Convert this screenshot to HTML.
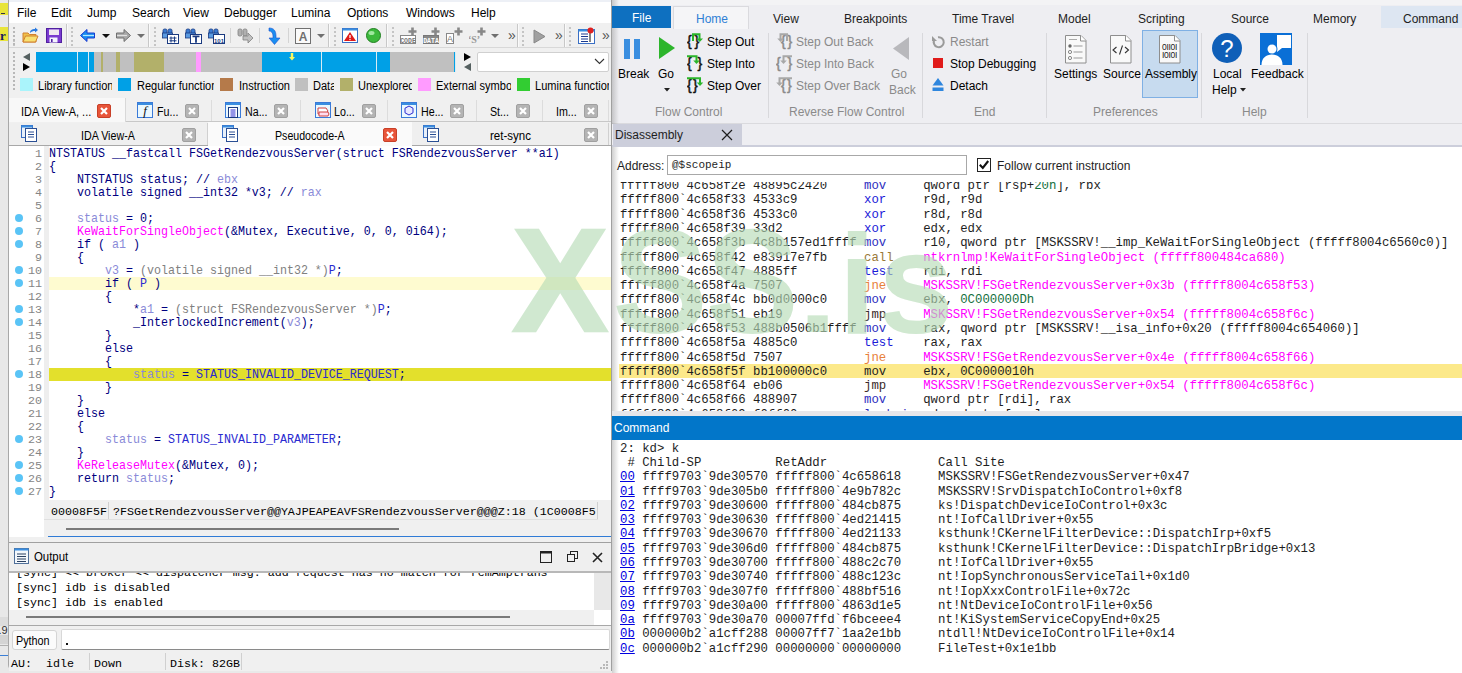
<!DOCTYPE html>
<html><head><meta charset="utf-8"><style>
*{box-sizing:border-box;margin:0;padding:0}
body{width:1462px;height:673px;position:relative;overflow:hidden;background:#e9e9e9;font-family:"Liberation Sans",sans-serif;font-size:12px;color:#000}
.a{position:absolute}
.t{position:absolute;white-space:pre;line-height:1}
.mono{font-family:"Liberation Mono",monospace}
</style></head>
<body>
<div class="a" style="left:0;top:0;width:9px;height:673px;background:#e8e8e8"></div><div class="a" style="left:0;top:3px;width:8px;height:12px;background:#e8e43a"></div><div class="a" style="left:0;top:27px;width:8px;height:13.5px;background:#e8e43a"></div><div class="a" style="left:1px;top:13px;width:4px;height:1px;background:#334"></div><div class="t" style="left:0px;top:29px;font-size:13px;font-family:&quot;Liberation Serif&quot;;font-weight:bold;color:#1a1a60">r</div><div class="a" style="left:0;top:617px;width:8px;height:9px;background:#dcdcdc"></div><div class="t" style="left:-1.5px;top:625px;font-size:11px;color:#333">.9</div><div class="a" style="left:0;top:635px;width:8px;height:9px;background:#d4d4d4"></div><div class="a" style="left:0;top:645px;width:8px;height:1px;background:#b0b0b0"></div><div class="a" style="left:0;top:655px;width:8px;height:1px;background:#3b7fd6"></div><div class="a" style="left:8px;top:0;width:604px;height:671px;background:#f0f0f0;border-left:1px solid #a8a8a8;border-right:1px solid #a0a0a0;border-bottom:1px solid #a0a0a0;border-radius:0 0 0 6px"></div><div class="a" style="left:9px;top:0;width:602px;height:2px;background:#edf0f6"></div><div class="a" style="left:9px;top:2px;width:602px;height:21px;background:#fff"></div><div class="t" style="left:17px;top:7px;font-size:12px;color:#000">File</div><div class="t" style="left:51px;top:7px;font-size:12px;color:#000">Edit</div><div class="t" style="left:87px;top:7px;font-size:12px;color:#000">Jump</div><div class="t" style="left:132px;top:7px;font-size:12px;color:#000">Search</div><div class="t" style="left:183px;top:7px;font-size:12px;color:#000">View</div><div class="t" style="left:224px;top:7px;font-size:12px;color:#000">Debugger</div><div class="t" style="left:291px;top:7px;font-size:12px;color:#000">Lumina</div><div class="t" style="left:347px;top:7px;font-size:12px;color:#000">Options</div><div class="t" style="left:406px;top:7px;font-size:12px;color:#000">Windows</div><div class="t" style="left:471px;top:7px;font-size:12px;color:#000">Help</div><div class="a" style="left:9px;top:23px;width:602px;height:25px;background:#f0f0f0;border-bottom:1px solid #d8d8d8"></div><div class="a" style="left:66px;top:24px;width:1px;height:23px;background:#c8c8c8"></div><div class="a" style="left:67px;top:24px;width:1px;height:23px;background:#fafafa"></div><div class="a" style="left:148px;top:24px;width:1px;height:23px;background:#c8c8c8"></div><div class="a" style="left:149px;top:24px;width:1px;height:23px;background:#fafafa"></div><div class="a" style="left:328px;top:24px;width:1px;height:23px;background:#c8c8c8"></div><div class="a" style="left:329px;top:24px;width:1px;height:23px;background:#fafafa"></div><div class="a" style="left:386px;top:24px;width:1px;height:23px;background:#c8c8c8"></div><div class="a" style="left:387px;top:24px;width:1px;height:23px;background:#fafafa"></div><div class="a" style="left:517px;top:24px;width:1px;height:23px;background:#c8c8c8"></div><div class="a" style="left:518px;top:24px;width:1px;height:23px;background:#fafafa"></div><div class="a" style="left:564px;top:24px;width:1px;height:23px;background:#c8c8c8"></div><div class="a" style="left:565px;top:24px;width:1px;height:23px;background:#fafafa"></div><div class="a" style="left:13px;top:27.0px;width:2px;height:2px;background:#c4c4c4"></div><div class="a" style="left:13px;top:31.2px;width:2px;height:2px;background:#c4c4c4"></div><div class="a" style="left:13px;top:35.4px;width:2px;height:2px;background:#c4c4c4"></div><div class="a" style="left:13px;top:39.6px;width:2px;height:2px;background:#c4c4c4"></div><div class="a" style="left:13px;top:43.8px;width:2px;height:2px;background:#c4c4c4"></div><div class="a" style="left:71px;top:27.0px;width:2px;height:2px;background:#c4c4c4"></div><div class="a" style="left:71px;top:31.2px;width:2px;height:2px;background:#c4c4c4"></div><div class="a" style="left:71px;top:35.4px;width:2px;height:2px;background:#c4c4c4"></div><div class="a" style="left:71px;top:39.6px;width:2px;height:2px;background:#c4c4c4"></div><div class="a" style="left:71px;top:43.8px;width:2px;height:2px;background:#c4c4c4"></div><div class="a" style="left:154px;top:27.0px;width:2px;height:2px;background:#c4c4c4"></div><div class="a" style="left:154px;top:31.2px;width:2px;height:2px;background:#c4c4c4"></div><div class="a" style="left:154px;top:35.4px;width:2px;height:2px;background:#c4c4c4"></div><div class="a" style="left:154px;top:39.6px;width:2px;height:2px;background:#c4c4c4"></div><div class="a" style="left:154px;top:43.8px;width:2px;height:2px;background:#c4c4c4"></div><div class="a" style="left:334px;top:27.0px;width:2px;height:2px;background:#c4c4c4"></div><div class="a" style="left:334px;top:31.2px;width:2px;height:2px;background:#c4c4c4"></div><div class="a" style="left:334px;top:35.4px;width:2px;height:2px;background:#c4c4c4"></div><div class="a" style="left:334px;top:39.6px;width:2px;height:2px;background:#c4c4c4"></div><div class="a" style="left:334px;top:43.8px;width:2px;height:2px;background:#c4c4c4"></div><div class="a" style="left:392px;top:27.0px;width:2px;height:2px;background:#c4c4c4"></div><div class="a" style="left:392px;top:31.2px;width:2px;height:2px;background:#c4c4c4"></div><div class="a" style="left:392px;top:35.4px;width:2px;height:2px;background:#c4c4c4"></div><div class="a" style="left:392px;top:39.6px;width:2px;height:2px;background:#c4c4c4"></div><div class="a" style="left:392px;top:43.8px;width:2px;height:2px;background:#c4c4c4"></div><div class="a" style="left:522px;top:27.0px;width:2px;height:2px;background:#c4c4c4"></div><div class="a" style="left:522px;top:31.2px;width:2px;height:2px;background:#c4c4c4"></div><div class="a" style="left:522px;top:35.4px;width:2px;height:2px;background:#c4c4c4"></div><div class="a" style="left:522px;top:39.6px;width:2px;height:2px;background:#c4c4c4"></div><div class="a" style="left:522px;top:43.8px;width:2px;height:2px;background:#c4c4c4"></div><div class="a" style="left:569px;top:27.0px;width:2px;height:2px;background:#c4c4c4"></div><div class="a" style="left:569px;top:31.2px;width:2px;height:2px;background:#c4c4c4"></div><div class="a" style="left:569px;top:35.4px;width:2px;height:2px;background:#c4c4c4"></div><div class="a" style="left:569px;top:39.6px;width:2px;height:2px;background:#c4c4c4"></div><div class="a" style="left:569px;top:43.8px;width:2px;height:2px;background:#c4c4c4"></div><svg class="a" style="left:22px;top:27px" width="17" height="17"><path d="M1 6h5l1.5 1.5H14V15H1z" fill="#f0c048" stroke="#d08030"/><path d="M1 15l2.5-6H16l-2.5 6z" fill="#f8e070" stroke="#d08030"/><path d="M8 6c0-3 2-4 5-4V0.5L16 3l-3 2.5V4c-2 0-3.5 0.5-5 2z" fill="#2a7ae0"/></svg><svg class="a" style="left:46px;top:28px" width="16" height="15"><rect x="0.5" y="0.5" width="15" height="14" fill="#7a3ad0" stroke="#5020a0"/><rect x="3" y="1.5" width="10" height="5.5" fill="#f0e8f0"/><rect x="3.5" y="9.5" width="8" height="5" fill="#f4f4ff"/><rect x="5" y="11" width="1.6" height="3" fill="#5020a0"/></svg><svg class="a" style="left:80px;top:29px" width="15" height="13"><path d="M0.5 6.5L7 0.5v3.5h7.5v5H7v3.5z" fill="#1a8ef0" stroke="#1a3ad0" stroke-width="1"/><path d="M3 6.5h11" stroke="#b8e8ff" stroke-width="1.2"/></svg><svg class="a" style="left:102px;top:34px" width="8" height="5"><path d="M0 0h8L4 4z" fill="#111"/></svg><svg class="a" style="left:116px;top:29px" width="15" height="13"><path d="M14.5 6.5L8 0.5v3.5H0.5v5H8v3.5z" fill="#a8a8a8" stroke="#707070" stroke-width="1"/><path d="M1 6.5h10" stroke="#e0e0e0" stroke-width="1.2"/></svg><svg class="a" style="left:137px;top:34px" width="8" height="5"><path d="M0 0h8L4 4z" fill="#707070"/></svg><svg class="a" style="left:162px;top:27px" width="17" height="17"><rect x="1" y="2" width="4" height="7" rx="1.5" fill="#3a7ad0" stroke="#1a3a80" stroke-width="0.8"/><rect x="6" y="2" width="4" height="7" rx="1.5" fill="#3a7ad0" stroke="#1a3a80" stroke-width="0.8"/><rect x="0.5" y="6" width="10" height="5" fill="#5a9ae0" stroke="#1a3a80" stroke-width="0.8"/><rect x="5.5" y="7.5" width="11" height="9" fill="#fff" stroke="#1a3a80"/><path d="M9 9.5v6M12.5 9.5v6M7.5 11h7M7.5 13.8h7" stroke="#1a3a80" stroke-width="1"/></svg><svg class="a" style="left:185px;top:27px" width="17" height="17"><rect x="1" y="2" width="4" height="7" rx="1.5" fill="#3a7ad0" stroke="#1a3a80" stroke-width="0.8"/><rect x="6" y="2" width="4" height="7" rx="1.5" fill="#3a7ad0" stroke="#1a3a80" stroke-width="0.8"/><rect x="0.5" y="6" width="10" height="5" fill="#5a9ae0" stroke="#1a3a80" stroke-width="0.8"/><rect x="5.5" y="7.5" width="11" height="9" fill="#fff" stroke="#1a3a80"/><path d="M7.5 9.3h7M11 9.3v6.5" stroke="#1a3a80" stroke-width="1.8"/></svg><svg class="a" style="left:208px;top:27px" width="17" height="17"><rect x="1" y="2" width="4" height="7" rx="1.5" fill="#3a7ad0" stroke="#1a3a80" stroke-width="0.8"/><rect x="6" y="2" width="4" height="7" rx="1.5" fill="#3a7ad0" stroke="#1a3a80" stroke-width="0.8"/><rect x="0.5" y="6" width="10" height="5" fill="#5a9ae0" stroke="#1a3a80" stroke-width="0.8"/><rect x="5.5" y="7.5" width="11" height="9" fill="#fff" stroke="#1a3a80"/><text x="11" y="15.5" text-anchor="middle" font-family="Liberation Sans" font-weight="bold" font-size="6" fill="#1a3a80">101</text></svg><svg class="a" style="left:237px;top:27px" width="17" height="17"><rect x="1" y="2" width="4" height="7" rx="1.5" fill="#b0b0b0" stroke="#808080" stroke-width="0.8"/><rect x="6" y="2" width="4" height="7" rx="1.5" fill="#b0b0b0" stroke="#808080" stroke-width="0.8"/><path d="M6 9h5V6l5 5-5 5v-3H6z" fill="#c0c0c0" stroke="#808080" stroke-width="0.8"/></svg><div class="a" style="left:230px;top:28px;width:1px;height:15px;background:#d4d4d4"></div><div class="a" style="left:259px;top:28px;width:1px;height:15px;background:#d4d4d4"></div><div class="a" style="left:288px;top:28px;width:1px;height:15px;background:#d4d4d4"></div><svg class="a" style="left:268px;top:27px" width="13" height="18"><path d="M1 1c5 0 7 3 7 8v2h4l-5.5 6.5L1 11h4V9c0-3-1.5-5-4-5z" fill="#1a8ef0" stroke="#1a50d0" stroke-width="0.6"/></svg><svg class="a" style="left:295px;top:28px" width="16" height="16"><rect x="0.5" y="0.5" width="15" height="15" fill="#fafafa" stroke="#707070"/><text x="8" y="13" text-anchor="middle" font-family="Liberation Sans" font-weight="bold" font-size="12" fill="#707070">A</text></svg><svg class="a" style="left:317px;top:34px" width="8" height="5"><path d="M0 0h8L4 4z" fill="#707070"/></svg><svg class="a" style="left:342px;top:28px" width="16" height="15"><rect x="0.5" y="0.5" width="15" height="14" fill="#fff" stroke="#3a6fc4"/><rect x="0.5" y="0.5" width="15" height="2" fill="#3a8ee0"/><path d="M8 4L14 13H2z" fill="#e01818"/><path d="M8 7v3" stroke="#fff" stroke-width="1.3"/><circle cx="8" cy="11.5" r="0.7" fill="#fff"/></svg><svg class="a" style="left:366px;top:28px" width="15" height="15"><circle cx="7.5" cy="7.5" r="7" fill="#3cb83c" stroke="#208020"/><ellipse cx="5.5" cy="5" rx="3" ry="2" fill="#a0e8a0"/></svg><svg class="a" style="left:400px;top:27px" width="17" height="17"><rect x="0.5" y="8.5" width="15" height="8" fill="#fff" stroke="#888"/><text x="8" y="15.5" text-anchor="middle" font-family="Liberation Mono" font-weight="bold" font-size="6.5" fill="#777">CODE</text><path d="M12.5 0.5v8M8.5 4.5h8" stroke="#888" stroke-width="2.6"/></svg><svg class="a" style="left:423px;top:27px" width="17" height="17"><rect x="0.5" y="8.5" width="15" height="8" fill="#888" stroke="#777"/><text x="8" y="15.5" text-anchor="middle" font-family="Liberation Mono" font-weight="bold" font-size="6.5" fill="#fff">DATA</text><path d="M12.5 0.5v8M8.5 4.5h8" stroke="#888" stroke-width="2.6"/></svg><svg class="a" style="left:446px;top:27px" width="17" height="17"><rect x="0.5" y="6.5" width="7" height="10" fill="#fff" stroke="#888"/><text x="4" y="15" text-anchor="middle" font-family="Liberation Sans" font-size="9" fill="#777">A</text><path d="M12.5 0.5v8M8.5 4.5h8" stroke="#888" stroke-width="2.6"/></svg><svg class="a" style="left:469px;top:27px" width="17" height="17"><text x="5" y="16" text-anchor="middle" font-family="Liberation Serif" font-weight="bold" font-size="10" fill="#999">‘S’</text><path d="M12.5 0.5v8M8.5 4.5h8" stroke="#888" stroke-width="2.6"/></svg><svg class="a" style="left:491px;top:34px" width="8" height="5"><path d="M0 0h8L4 4z" fill="#707070"/></svg><div class="t" style="left:508px;top:28px;font-size:14px;color:#555">»</div><div class="t" style="left:555px;top:28px;font-size:14px;color:#555">»</div><div class="t" style="left:602px;top:28px;font-size:14px;color:#555">»</div><svg class="a" style="left:533px;top:29px" width="13" height="15"><path d="M1 1l11 6.5L1 14z" fill="#a0a0a0" stroke="#888"/></svg><svg class="a" style="left:578px;top:27px" width="17" height="17"><rect x="0.5" y="2.5" width="16" height="14" fill="#fff" stroke="#3a6fc4"/><rect x="0.5" y="2.5" width="16" height="2" fill="#3a8ee0"/><path d="M3 7h7M3 9.5h7M3 12h7M3 14.5h7" stroke="#1a3a90" stroke-width="1.2"/><path d="M12 6v9" stroke="#666" stroke-width="1.6"/><circle cx="12.5" cy="3.5" r="3" fill="#e02020"/></svg><div class="a" style="left:36px;top:52px;width:420px;height:20px;background:#d8ecf4"></div><div class="a" style="left:36px;top:52px;width:41px;height:20px;background:#00a0e6"></div><div class="a" style="left:77.5px;top:52px;width:10.5px;height:20px;background:#00a0e6"></div><div class="a" style="left:89px;top:52px;width:4.599999999999994px;height:20px;background:#00a0e6"></div><div class="a" style="left:93.6px;top:52px;width:7.1000000000000085px;height:20px;background:#c0c0c0"></div><div class="a" style="left:100.7px;top:52px;width:2.299999999999997px;height:20px;background:#b2b06a"></div><div class="a" style="left:103px;top:52px;width:12.900000000000006px;height:20px;background:#c0c0c0"></div><div class="a" style="left:115.9px;top:52px;width:4.3999999999999915px;height:20px;background:#b2b06a"></div><div class="a" style="left:120.3px;top:52px;width:13.399999999999991px;height:20px;background:#c0c0c0"></div><div class="a" style="left:133.7px;top:52px;width:30.100000000000023px;height:20px;background:#b2b06a"></div><div class="a" style="left:163.8px;top:52px;width:31.899999999999977px;height:20px;background:#c0c0c0"></div><div class="a" style="left:195.7px;top:52px;width:5.300000000000011px;height:20px;background:#ff9bff"></div><div class="a" style="left:201px;top:52px;width:60.89999999999998px;height:20px;background:#c0c0c0"></div><div class="a" style="left:261.9px;top:52px;width:59.10000000000002px;height:20px;background:#00a0e6"></div><div class="a" style="left:321.8px;top:52px;width:54.19999999999999px;height:20px;background:#00a0e6"></div><div class="a" style="left:377px;top:52px;width:12.800000000000011px;height:20px;background:#00a0e6"></div><div class="a" style="left:389.8px;top:52px;width:64.0px;height:20px;background:#c0c0c0"></div><div class="a" style="left:453.8px;top:52px;width:1.599999999999966px;height:20px;background:#00a0e6"></div><svg class="a" style="left:288.5px;top:53px" width="6" height="8"><path d="M1.8 0h2.4v4h1.8L3 7.6 0 4h1.8z" fill="#f8f860"/></svg><svg class="a" style="left:22px;top:52px" width="9" height="20"><path d="M8 1v8L1 5z" fill="#556060"/><path d="M1 11v8l7-4z" fill="#000"/></svg><svg class="a" style="left:463px;top:52px" width="9" height="20"><path d="M1 1v8l7-4z" fill="#000"/><path d="M8 11v8L1 15z" fill="#556060"/></svg><div class="a" style="left:477px;top:52px;width:132px;height:20px;background:#fff;border:1px solid #d0d0d0;border-radius:2px"></div><svg class="a" style="left:594px;top:58px" width="11" height="7"><path d="M1 1l4.5 4.5L10 1" stroke="#333" fill="none" stroke-width="1.1"/></svg><div class="a" style="left:20px;top:78px;width:13px;height:13px;background:#aaf4fb"></div><div class="a" style="left:38px;top:78px;width:74px;height:15px;overflow:hidden"><div class="t" style="left:0;top:2px;font-size:12px;transform:scaleX(0.92);transform-origin:0 0">Library function</div></div><div class="a" style="left:118px;top:78px;width:13px;height:13px;background:#00a0e6"></div><div class="a" style="left:136.5px;top:78px;width:77px;height:15px;overflow:hidden"><div class="t" style="left:0;top:2px;font-size:12px;transform:scaleX(0.92);transform-origin:0 0">Regular function</div></div><div class="a" style="left:220px;top:78px;width:13px;height:13px;background:#b57a4a"></div><div class="a" style="left:238.5px;top:78px;width:51px;height:15px;overflow:hidden"><div class="t" style="left:0;top:2px;font-size:12px;transform:scaleX(0.92);transform-origin:0 0">Instruction</div></div><div class="a" style="left:295px;top:78px;width:13px;height:13px;background:#c0c0c0"></div><div class="a" style="left:313px;top:78px;width:21px;height:15px;overflow:hidden"><div class="t" style="left:0;top:2px;font-size:12px;transform:scaleX(0.92);transform-origin:0 0">Data</div></div><div class="a" style="left:340px;top:78px;width:13px;height:13px;background:#b2b06a"></div><div class="a" style="left:358px;top:78px;width:54px;height:15px;overflow:hidden"><div class="t" style="left:0;top:2px;font-size:12px;transform:scaleX(0.92);transform-origin:0 0">Unexplored</div></div><div class="a" style="left:417.5px;top:78px;width:13px;height:13px;background:#ff9bff"></div><div class="a" style="left:436px;top:78px;width:75px;height:15px;overflow:hidden"><div class="t" style="left:0;top:2px;font-size:12px;transform:scaleX(0.92);transform-origin:0 0">External symbol</div></div><div class="a" style="left:517px;top:78px;width:13px;height:13px;background:#32cd32"></div><div class="a" style="left:535px;top:78px;width:74px;height:15px;overflow:hidden"><div class="t" style="left:0;top:2px;font-size:12px;transform:scaleX(0.92);transform-origin:0 0">Lumina function</div></div><div class="a" style="left:13px;top:27px;width:2px;height:2px;background:#b8b8b8"></div><div class="a" style="left:13px;top:31px;width:2px;height:2px;background:#b8b8b8"></div><div class="a" style="left:13px;top:35px;width:2px;height:2px;background:#b8b8b8"></div><div class="a" style="left:13px;top:39px;width:2px;height:2px;background:#b8b8b8"></div><div class="a" style="left:13px;top:43px;width:2px;height:2px;background:#b8b8b8"></div><div class="a" style="left:13px;top:52px;width:2px;height:2px;background:#b8b8b8"></div><div class="a" style="left:13px;top:56px;width:2px;height:2px;background:#b8b8b8"></div><div class="a" style="left:13px;top:60px;width:2px;height:2px;background:#b8b8b8"></div><div class="a" style="left:13px;top:64px;width:2px;height:2px;background:#b8b8b8"></div><div class="a" style="left:13px;top:68px;width:2px;height:2px;background:#b8b8b8"></div><div class="a" style="left:13px;top:72px;width:2px;height:2px;background:#b8b8b8"></div><div class="a" style="left:13px;top:76px;width:2px;height:2px;background:#b8b8b8"></div><div class="a" style="left:13px;top:80px;width:2px;height:2px;background:#b8b8b8"></div><div class="a" style="left:13px;top:84px;width:2px;height:2px;background:#b8b8b8"></div><div class="a" style="left:13px;top:88px;width:2px;height:2px;background:#b8b8b8"></div><div class="a" style="left:9px;top:99px;width:602px;height:23px;background:#f0f0f0"></div><div class="a" style="left:9px;top:121px;width:602px;height:1px;background:#c8c8c8"></div><div class="a" style="left:9px;top:98px;width:117px;height:24px;background:#f8f8f8;border-right:1px solid #d8d8d8"></div><div class="t" style="left:21px;top:106px;transform:scaleX(0.91);transform-origin:0 0">IDA View-A, ...</div><div class="a" style="left:97px;top:104px;width:14px;height:14px;background:#e8553a;border:1px solid #c84028;border-radius:2px"></div><svg class="a" style="left:97px;top:104px" width="14" height="14"><path d="M4 4l6 6M10 4l-6 6" stroke="#fff" stroke-width="2.2"/></svg><div class="a" style="left:126px;top:100px;width:86px;height:21px;border-right:1px solid #dcdcdc"></div><svg class="a" style="left:137px;top:102px" width="16" height="16"><rect x="0.5" y="0.5" width="15" height="15" fill="#eaf8ff" stroke="#3a7ad8"/><rect x="1" y="1" width="14" height="2" fill="#3a8ee0"/><text x="8" y="13" text-anchor="middle" font-family="Liberation Serif" font-style="italic" font-size="13" fill="#111">f</text></svg><div class="t" style="left:157px;top:106px;transform:scaleX(0.89);transform-origin:0 0">Fu...</div><div class="a" style="left:185px;top:104px;width:14px;height:14px;background:#b4b4b4;border:1px solid #a0a0a0;border-radius:2px"></div><svg class="a" style="left:185px;top:104px" width="14" height="14"><path d="M4 4l6 6M10 4l-6 6" stroke="#fff" stroke-width="2.2"/></svg><div class="a" style="left:212px;top:100px;width:89px;height:21px;border-right:1px solid #dcdcdc"></div><svg class="a" style="left:225px;top:102px" width="16" height="16"><rect x="0.5" y="0.5" width="15" height="15" fill="#eaf8ff" stroke="#3a7ad8"/><rect x="1" y="1" width="14" height="2" fill="#3a8ee0"/><rect x="3.5" y="5.5" width="9" height="10" fill="#fff" stroke="#1a3a80"/><path d="M5.5 8h5M5.5 10h5M5.5 12h5M5.5 14h5" stroke="#2a2ad0"/></svg><div class="t" style="left:245px;top:106px;transform:scaleX(0.89);transform-origin:0 0">Na...</div><div class="a" style="left:274px;top:104px;width:14px;height:14px;background:#b4b4b4;border:1px solid #a0a0a0;border-radius:2px"></div><svg class="a" style="left:274px;top:104px" width="14" height="14"><path d="M4 4l6 6M10 4l-6 6" stroke="#fff" stroke-width="2.2"/></svg><div class="a" style="left:301px;top:100px;width:87px;height:21px;border-right:1px solid #dcdcdc"></div><svg class="a" style="left:315px;top:102px" width="16" height="16"><rect x="0.5" y="0.5" width="15" height="15" fill="#eaf8ff" stroke="#3a7ad8"/><rect x="1" y="1" width="14" height="2" fill="#3a8ee0"/><path d="M3 6h8l2 3-2 3H3z" fill="#fff" stroke="#d04040"/><path d="M4 10h9l1 2-1 2H4z" fill="#fde" stroke="#d04040"/></svg><div class="t" style="left:334px;top:106px;transform:scaleX(0.89);transform-origin:0 0">Lo...</div><div class="a" style="left:362px;top:104px;width:14px;height:14px;background:#b4b4b4;border:1px solid #a0a0a0;border-radius:2px"></div><svg class="a" style="left:362px;top:104px" width="14" height="14"><path d="M4 4l6 6M10 4l-6 6" stroke="#fff" stroke-width="2.2"/></svg><div class="a" style="left:388px;top:100px;width:89px;height:21px;border-right:1px solid #dcdcdc"></div><svg class="a" style="left:401px;top:102px" width="16" height="16"><rect x="0.5" y="0.5" width="15" height="15" fill="#eaf8ff" stroke="#3a7ad8"/><rect x="1" y="1" width="14" height="2" fill="#3a8ee0"/><path d="M8 4l4 2.2v4.6L8 13l-4-2.2V6.2z" fill="#e8e8ff" stroke="#2a2ad0"/></svg><div class="t" style="left:421px;top:106px;transform:scaleX(0.89);transform-origin:0 0">He...</div><div class="a" style="left:450px;top:104px;width:14px;height:14px;background:#b4b4b4;border:1px solid #a0a0a0;border-radius:2px"></div><svg class="a" style="left:450px;top:104px" width="14" height="14"><path d="M4 4l6 6M10 4l-6 6" stroke="#fff" stroke-width="2.2"/></svg><div class="a" style="left:477px;top:100px;width:66px;height:21px;border-right:1px solid #dcdcdc"></div><div class="t" style="left:490px;top:106px;transform:scaleX(0.89);transform-origin:0 0">St...</div><div class="a" style="left:516px;top:104px;width:14px;height:14px;background:#b4b4b4;border:1px solid #a0a0a0;border-radius:2px"></div><svg class="a" style="left:516px;top:104px" width="14" height="14"><path d="M4 4l6 6M10 4l-6 6" stroke="#fff" stroke-width="2.2"/></svg><div class="a" style="left:543px;top:100px;width:66px;height:21px;border-right:1px solid #dcdcdc"></div><div class="t" style="left:556px;top:106px;transform:scaleX(0.89);transform-origin:0 0">Im...</div><div class="a" style="left:584px;top:104px;width:14px;height:14px;background:#b4b4b4;border:1px solid #a0a0a0;border-radius:2px"></div><svg class="a" style="left:584px;top:104px" width="14" height="14"><path d="M4 4l6 6M10 4l-6 6" stroke="#fff" stroke-width="2.2"/></svg><div class="a" style="left:9px;top:122px;width:602px;height:24px;background:#f0f0f0"></div><div class="a" style="left:9px;top:145px;width:602px;height:1px;background:#a8a8a8"></div><div class="a" style="left:9px;top:123px;width:199px;height:22px;background:#efefef;border-right:1px solid #d0d0d0"></div><div class="a" style="left:208px;top:122px;width:204px;height:24px;background:#fafafa"></div><div class="a" style="left:412px;top:123px;width:197px;height:22px;background:#efefef;border-right:1px solid #d0d0d0"></div><svg class="a" style="left:21px;top:125px" width="17" height="17"><rect x="0.5" y="0.5" width="11" height="12" fill="#e8f0fa" stroke="#3a6fc4"/><rect x="0.5" y="0.5" width="11" height="2" fill="#3a8ee0"/><rect x="4.5" y="3.5" width="11" height="13" fill="#fff" stroke="#2a4f94"/><path d="M7 7h6M7 9.5h6M7 12h6" stroke="#2a4f94"/></svg><svg class="a" style="left:222px;top:125px" width="17" height="17"><rect x="0.5" y="0.5" width="11" height="12" fill="#e8f0fa" stroke="#3a6fc4"/><rect x="0.5" y="0.5" width="11" height="2" fill="#3a8ee0"/><rect x="4.5" y="3.5" width="11" height="13" fill="#fff" stroke="#2a4f94"/><path d="M7 7h6M7 9.5h6M7 12h6" stroke="#2a4f94"/></svg><svg class="a" style="left:423px;top:125px" width="17" height="17"><rect x="0.5" y="0.5" width="11" height="12" fill="#e8f0fa" stroke="#3a6fc4"/><rect x="0.5" y="0.5" width="11" height="2" fill="#3a8ee0"/><rect x="4.5" y="3.5" width="11" height="13" fill="#fff" stroke="#2a4f94"/><path d="M7 7h6M7 9.5h6M7 12h6" stroke="#2a4f94"/></svg><div class="t" style="left:81px;top:130px;transform:scaleX(0.89);transform-origin:0 0">IDA View-A</div><div class="a" style="left:182px;top:128px;width:14px;height:14px;background:#b4b4b4;border:1px solid #a0a0a0;border-radius:2px"></div><svg class="a" style="left:182px;top:128px" width="14" height="14"><path d="M4 4l6 6M10 4l-6 6" stroke="#fff" stroke-width="2.2"/></svg><div class="t" style="left:275px;top:130px;transform:scaleX(0.885);transform-origin:0 0">Pseudocode-A</div><div class="a" style="left:383px;top:128px;width:14px;height:14px;background:#e8553a;border:1px solid #c84028;border-radius:2px"></div><svg class="a" style="left:383px;top:128px" width="14" height="14"><path d="M4 4l6 6M10 4l-6 6" stroke="#fff" stroke-width="2.2"/></svg><div class="t" style="left:490px;top:130px;transform:scaleX(0.96);transform-origin:0 0">ret-sync</div><div class="a" style="left:584px;top:128px;width:14px;height:14px;background:#b4b4b4;border:1px solid #a0a0a0;border-radius:2px"></div><svg class="a" style="left:584px;top:128px" width="14" height="14"><path d="M4 4l6 6M10 4l-6 6" stroke="#fff" stroke-width="2.2"/></svg><div class="a" style="left:9px;top:146px;width:602px;height:354px;background:#fff"></div><div class="a" style="left:44px;top:146px;width:5px;height:354px;background:#eeeeee"></div><div class="a" style="left:49px;top:277px;width:562px;height:13px;background:#fefbd0"></div><div class="a" style="left:49px;top:368px;width:562px;height:13px;background:#e3e02c"></div><div class="t mono" style="left:0;width:42px;text-align:right;top:148px;height:13px;line-height:13px;font-size:11.667px;color:#858585">1</div><div class="t mono" style="left:48.6px;top:148px;height:13px;line-height:13px;font-size:11.9px;transform:scaleX(0.9804);transform-origin:0 0"><span style="color:#000080">NTSTATUS __fastcall FSGetRendezvousServer(struct FSRendezvousServer **a1)</span></div><div class="t mono" style="left:0;width:42px;text-align:right;top:161px;height:13px;line-height:13px;font-size:11.667px;color:#858585">2</div><div class="t mono" style="left:48.6px;top:161px;height:13px;line-height:13px;font-size:11.9px;transform:scaleX(0.9804);transform-origin:0 0"><span style="color:#000080">{</span></div><div class="t mono" style="left:0;width:42px;text-align:right;top:174px;height:13px;line-height:13px;font-size:11.667px;color:#858585">3</div><div class="t mono" style="left:48.6px;top:174px;height:13px;line-height:13px;font-size:11.9px;transform:scaleX(0.9804);transform-origin:0 0"><span style="color:#000080">    NTSTATUS status; // </span><span style="color:#8a8ad8">ebx</span></div><div class="t mono" style="left:0;width:42px;text-align:right;top:187px;height:13px;line-height:13px;font-size:11.667px;color:#858585">4</div><div class="t mono" style="left:48.6px;top:187px;height:13px;line-height:13px;font-size:11.9px;transform:scaleX(0.9804);transform-origin:0 0"><span style="color:#000080">    volatile signed __int32 *v3; // </span><span style="color:#8a8ad8">rax</span></div><div class="t mono" style="left:0;width:42px;text-align:right;top:200px;height:13px;line-height:13px;font-size:11.667px;color:#858585">5</div><div class="t mono" style="left:48.6px;top:200px;height:13px;line-height:13px;font-size:11.9px;transform:scaleX(0.9804);transform-origin:0 0"></div><div class="t mono" style="left:0;width:42px;text-align:right;top:213px;height:13px;line-height:13px;font-size:11.667px;color:#858585">6</div><div class="a" style="left:14.5px;top:214.2px;width:8px;height:8px;border-radius:50%;background:#5ac4f6"></div><div class="t mono" style="left:48.6px;top:213px;height:13px;line-height:13px;font-size:11.9px;transform:scaleX(0.9804);transform-origin:0 0"><span style="color:#000080">    </span><span style="color:#8a8ad8">status</span><span style="color:#000080"> = 0;</span></div><div class="t mono" style="left:0;width:42px;text-align:right;top:226px;height:13px;line-height:13px;font-size:11.667px;color:#858585">7</div><div class="a" style="left:14.5px;top:227.2px;width:8px;height:8px;border-radius:50%;background:#5ac4f6"></div><div class="t mono" style="left:48.6px;top:226px;height:13px;line-height:13px;font-size:11.9px;transform:scaleX(0.9804);transform-origin:0 0"><span style="color:#000080">    </span><span style="color:#ff00ff">KeWaitForSingleObject</span><span style="color:#000080">(&amp;Mutex, Executive, 0, 0, 0i64);</span></div><div class="t mono" style="left:0;width:42px;text-align:right;top:239px;height:13px;line-height:13px;font-size:11.667px;color:#858585">8</div><div class="a" style="left:14.5px;top:240.2px;width:8px;height:8px;border-radius:50%;background:#5ac4f6"></div><div class="t mono" style="left:48.6px;top:239px;height:13px;line-height:13px;font-size:11.9px;transform:scaleX(0.9804);transform-origin:0 0"><span style="color:#000080">    if ( </span><span style="color:#8a8ad8">a1</span><span style="color:#000080"> )</span></div><div class="t mono" style="left:0;width:42px;text-align:right;top:252px;height:13px;line-height:13px;font-size:11.667px;color:#858585">9</div><div class="t mono" style="left:48.6px;top:252px;height:13px;line-height:13px;font-size:11.9px;transform:scaleX(0.9804);transform-origin:0 0"><span style="color:#000080">    {</span></div><div class="t mono" style="left:0;width:42px;text-align:right;top:265px;height:13px;line-height:13px;font-size:11.667px;color:#858585">10</div><div class="a" style="left:14.5px;top:266.2px;width:8px;height:8px;border-radius:50%;background:#5ac4f6"></div><div class="t mono" style="left:48.6px;top:265px;height:13px;line-height:13px;font-size:11.9px;transform:scaleX(0.9804);transform-origin:0 0"><span style="color:#000080">        </span><span style="color:#8a8ad8">v3</span><span style="color:#000080"> = </span><span style="color:#808080">(volatile signed __int32 *)</span><span style="color:#2a2ad0">P</span><span style="color:#000080">;</span></div><div class="t mono" style="left:0;width:42px;text-align:right;top:278px;height:13px;line-height:13px;font-size:11.667px;color:#858585">11</div><div class="a" style="left:14.5px;top:279.2px;width:8px;height:8px;border-radius:50%;background:#5ac4f6"></div><div class="t mono" style="left:48.6px;top:278px;height:13px;line-height:13px;font-size:11.9px;transform:scaleX(0.9804);transform-origin:0 0"><span style="color:#000080">        if ( </span><span style="color:#2a2ad0">P</span><span style="color:#000080"> )</span></div><div class="t mono" style="left:0;width:42px;text-align:right;top:291px;height:13px;line-height:13px;font-size:11.667px;color:#858585">12</div><div class="t mono" style="left:48.6px;top:291px;height:13px;line-height:13px;font-size:11.9px;transform:scaleX(0.9804);transform-origin:0 0"><span style="color:#000080">        {</span></div><div class="t mono" style="left:0;width:42px;text-align:right;top:304px;height:13px;line-height:13px;font-size:11.667px;color:#858585">13</div><div class="a" style="left:14.5px;top:305.2px;width:8px;height:8px;border-radius:50%;background:#5ac4f6"></div><div class="t mono" style="left:48.6px;top:304px;height:13px;line-height:13px;font-size:11.9px;transform:scaleX(0.9804);transform-origin:0 0"><span style="color:#000080">            *</span><span style="color:#8a8ad8">a1</span><span style="color:#000080"> = </span><span style="color:#808080">(struct FSRendezvousServer *)</span><span style="color:#2a2ad0">P</span><span style="color:#000080">;</span></div><div class="t mono" style="left:0;width:42px;text-align:right;top:317px;height:13px;line-height:13px;font-size:11.667px;color:#858585">14</div><div class="a" style="left:14.5px;top:318.2px;width:8px;height:8px;border-radius:50%;background:#5ac4f6"></div><div class="t mono" style="left:48.6px;top:317px;height:13px;line-height:13px;font-size:11.9px;transform:scaleX(0.9804);transform-origin:0 0"><span style="color:#000080">            _InterlockedIncrement(</span><span style="color:#8a8ad8">v3</span><span style="color:#000080">);</span></div><div class="t mono" style="left:0;width:42px;text-align:right;top:330px;height:13px;line-height:13px;font-size:11.667px;color:#858585">15</div><div class="t mono" style="left:48.6px;top:330px;height:13px;line-height:13px;font-size:11.9px;transform:scaleX(0.9804);transform-origin:0 0"><span style="color:#000080">        }</span></div><div class="t mono" style="left:0;width:42px;text-align:right;top:343px;height:13px;line-height:13px;font-size:11.667px;color:#858585">16</div><div class="t mono" style="left:48.6px;top:343px;height:13px;line-height:13px;font-size:11.9px;transform:scaleX(0.9804);transform-origin:0 0"><span style="color:#000080">        else</span></div><div class="t mono" style="left:0;width:42px;text-align:right;top:356px;height:13px;line-height:13px;font-size:11.667px;color:#858585">17</div><div class="t mono" style="left:48.6px;top:356px;height:13px;line-height:13px;font-size:11.9px;transform:scaleX(0.9804);transform-origin:0 0"><span style="color:#000080">        {</span></div><div class="t mono" style="left:0;width:42px;text-align:right;top:369px;height:13px;line-height:13px;font-size:11.667px;color:#858585">18</div><div class="a" style="left:14.5px;top:370.2px;width:8px;height:8px;border-radius:50%;background:#5ac4f6"></div><div class="t mono" style="left:48.6px;top:369px;height:13px;line-height:13px;font-size:11.9px;transform:scaleX(0.9804);transform-origin:0 0"><span style="color:#000080">            </span><span style="color:#8a8ad8">status</span><span style="color:#000080"> = </span><span style="color:#2a2ad0">STATUS_INVALID_DEVICE_REQUEST</span><span style="color:#000080">;</span></div><div class="t mono" style="left:0;width:42px;text-align:right;top:382px;height:13px;line-height:13px;font-size:11.667px;color:#858585">19</div><div class="t mono" style="left:48.6px;top:382px;height:13px;line-height:13px;font-size:11.9px;transform:scaleX(0.9804);transform-origin:0 0"><span style="color:#000080">        }</span></div><div class="t mono" style="left:0;width:42px;text-align:right;top:395px;height:13px;line-height:13px;font-size:11.667px;color:#858585">20</div><div class="t mono" style="left:48.6px;top:395px;height:13px;line-height:13px;font-size:11.9px;transform:scaleX(0.9804);transform-origin:0 0"><span style="color:#000080">    }</span></div><div class="t mono" style="left:0;width:42px;text-align:right;top:408px;height:13px;line-height:13px;font-size:11.667px;color:#858585">21</div><div class="t mono" style="left:48.6px;top:408px;height:13px;line-height:13px;font-size:11.9px;transform:scaleX(0.9804);transform-origin:0 0"><span style="color:#000080">    else</span></div><div class="t mono" style="left:0;width:42px;text-align:right;top:421px;height:13px;line-height:13px;font-size:11.667px;color:#858585">22</div><div class="t mono" style="left:48.6px;top:421px;height:13px;line-height:13px;font-size:11.9px;transform:scaleX(0.9804);transform-origin:0 0"><span style="color:#000080">    {</span></div><div class="t mono" style="left:0;width:42px;text-align:right;top:434px;height:13px;line-height:13px;font-size:11.667px;color:#858585">23</div><div class="a" style="left:14.5px;top:435.2px;width:8px;height:8px;border-radius:50%;background:#5ac4f6"></div><div class="t mono" style="left:48.6px;top:434px;height:13px;line-height:13px;font-size:11.9px;transform:scaleX(0.9804);transform-origin:0 0"><span style="color:#000080">        </span><span style="color:#8a8ad8">status</span><span style="color:#000080"> = </span><span style="color:#2a2ad0">STATUS_INVALID_PARAMETER</span><span style="color:#000080">;</span></div><div class="t mono" style="left:0;width:42px;text-align:right;top:447px;height:13px;line-height:13px;font-size:11.667px;color:#858585">24</div><div class="t mono" style="left:48.6px;top:447px;height:13px;line-height:13px;font-size:11.9px;transform:scaleX(0.9804);transform-origin:0 0"><span style="color:#000080">    }</span></div><div class="t mono" style="left:0;width:42px;text-align:right;top:460px;height:13px;line-height:13px;font-size:11.667px;color:#858585">25</div><div class="a" style="left:14.5px;top:461.2px;width:8px;height:8px;border-radius:50%;background:#5ac4f6"></div><div class="t mono" style="left:48.6px;top:460px;height:13px;line-height:13px;font-size:11.9px;transform:scaleX(0.9804);transform-origin:0 0"><span style="color:#000080">    </span><span style="color:#ff00ff">KeReleaseMutex</span><span style="color:#000080">(&amp;Mutex, 0);</span></div><div class="t mono" style="left:0;width:42px;text-align:right;top:473px;height:13px;line-height:13px;font-size:11.667px;color:#858585">26</div><div class="a" style="left:14.5px;top:474.2px;width:8px;height:8px;border-radius:50%;background:#5ac4f6"></div><div class="t mono" style="left:48.6px;top:473px;height:13px;line-height:13px;font-size:11.9px;transform:scaleX(0.9804);transform-origin:0 0"><span style="color:#000080">    return </span><span style="color:#8a8ad8">status</span><span style="color:#000080">;</span></div><div class="t mono" style="left:0;width:42px;text-align:right;top:486px;height:13px;line-height:13px;font-size:11.667px;color:#858585">27</div><div class="a" style="left:14.5px;top:487.2px;width:8px;height:8px;border-radius:50%;background:#5ac4f6"></div><div class="t mono" style="left:48.6px;top:486px;height:13px;line-height:13px;font-size:11.9px;transform:scaleX(0.9804);transform-origin:0 0"><span style="color:#000080">}</span></div><div class="a" style="left:44px;top:500px;width:567px;height:20px;background:#f0f0f0;border-bottom:1px solid #e0e0e0"></div><div class="t mono" style="left:51px;top:507px;font-size:11.667px;color:#000">00008F5F</div><div class="a" style="left:108px;top:502px;width:1px;height:17px;background:#d0d0d0"></div><div class="t mono" style="left:113px;top:507px;font-size:11.667px;color:#000">?FSGetRendezvousServer@@YAJPEAPEAVFSRendezvousServer@@@Z:18 (1C0008F5</div><div class="a" style="left:597px;top:502px;width:1px;height:17px;background:#d0d0d0"></div><div class="a" style="left:598px;top:500px;width:13px;height:20px;background:#f0f0f0"></div><div class="a" style="left:44px;top:520px;width:567px;height:17px;background:#f0f0f0"></div><div class="a" style="left:66px;top:528px;width:333px;height:2px;background:#7a7a7a"></div><div class="a" style="left:48px;top:536px;width:563px;height:2px;background:#2f7bd6"></div><div class="a" style="left:9px;top:500px;width:35px;height:37px;background:#fff"></div><div class="a" style="left:9px;top:537px;width:602px;height:5px;background:#f0f0f0"></div><div class="a" style="left:9px;top:542px;width:602px;height:1px;background:#a0a0a0"></div><div class="a" style="left:9px;top:543px;width:602px;height:29px;background:#efefef"></div><div class="a" style="left:9px;top:571px;width:602px;height:2px;background:#b8b8b8"></div><svg class="a" style="left:14px;top:548px" width="15" height="16"><rect x="0.5" y="0.5" width="14" height="15" fill="#f4f8fc" stroke="#50709a"/><rect x="0.5" y="0.5" width="14" height="2" fill="#3a8ee0"/><path d="M3 6h9M3 8.5h9M3 11h9M3 13.5h9" stroke="#2a4060"/></svg><div class="t" style="left:34px;top:551px;font-size:12px;transform:scaleX(0.95);transform-origin:0 0">Output</div><svg class="a" style="left:540px;top:551px" width="12" height="12"><rect x="0.5" y="0.5" width="11" height="11" fill="none" stroke="#222"/><rect x="0.5" y="0.5" width="11" height="2" fill="#222"/></svg><svg class="a" style="left:567px;top:551px" width="11" height="11"><rect x="3.5" y="0.5" width="7" height="7" fill="none" stroke="#222"/><rect x="0.5" y="3.5" width="7" height="7" fill="#efefef" stroke="#222"/></svg><svg class="a" style="left:592px;top:552px" width="11" height="11"><path d="M1 1l9 9M10 1l-9 9" stroke="#222" stroke-width="1.6"/></svg><div class="a" style="left:9px;top:573px;width:585px;height:38px;background:#fff;overflow:hidden"><div class="t mono" style="left:7px;top:-7px;font-size:11.667px;line-height:15px;color:#000">[sync] <span>&lt;&lt; broker &lt;&lt; dispatcher msg: add request has no match for remAmptrans</span>
[sync] idb is disabled
[sync] idb is enabled</div></div><div class="a" style="left:594px;top:573px;width:17px;height:37px;background:#e8e8e8"></div><div class="a" style="left:9px;top:610px;width:585px;height:16px;background:#f0f0f0"></div><div class="a" style="left:594px;top:610px;width:17px;height:16px;background:#fff"></div><div class="a" style="left:26px;top:616px;width:484px;height:2px;background:#7a7a7a"></div><div class="a" style="left:9px;top:625px;width:602px;height:1px;background:#a8a8a8"></div><div class="a" style="left:9px;top:626px;width:602px;height:24px;background:#f0f0f0"></div><div class="a" style="left:12px;top:630px;width:45px;height:20px;background:#fbfbfb;border:1px solid #d4d4d4;border-radius:3px"></div><div class="t" style="left:16px;top:635px;font-size:12px;transform:scaleX(0.9);transform-origin:0 0">Python</div><div class="a" style="left:61px;top:629px;width:549px;height:21px;background:#fff;border:1px solid #d8d8d8;border-bottom:1px solid #8a8a8a;border-radius:2px"></div><div class="a" style="left:66px;top:643px;width:2px;height:2px;background:#111"></div><div class="a" style="left:9px;top:650px;width:602px;height:21px;background:#f0f0f0"></div><div class="t mono" style="left:11px;top:659px;font-size:11.667px">AU:  idle</div><div class="a" style="left:89px;top:653px;width:1px;height:17px;background:#d0d0d0"></div><div class="t mono" style="left:94px;top:659px;font-size:11.667px">Down</div><div class="a" style="left:165px;top:653px;width:1px;height:17px;background:#d0d0d0"></div><div class="t mono" style="left:170px;top:659px;font-size:11.667px">Disk: 82GB</div><div class="a" style="left:241px;top:653px;width:1px;height:17px;background:#d0d0d0"></div><div class="a" style="left:606px;top:667px;width:2px;height:2px;background:#b8b8b8"></div><div class="a" style="left:603px;top:667px;width:2px;height:2px;background:#b8b8b8"></div><div class="a" style="left:606px;top:664px;width:2px;height:2px;background:#b8b8b8"></div><div class="a" style="left:600px;top:667px;width:2px;height:2px;background:#b8b8b8"></div><div class="a" style="left:603px;top:664px;width:2px;height:2px;background:#b8b8b8"></div><div class="a" style="left:606px;top:661px;width:2px;height:2px;background:#b8b8b8"></div><div class="a" style="left:612px;top:0;width:850px;height:673px;background:#fff"></div><div class="a" style="left:612px;top:0;width:850px;height:124px;background:#eeeef2"></div><div class="a" style="left:612px;top:0;width:850px;height:5px;background:#f3f3f5"></div><div class="a" style="left:612px;top:123px;width:850px;height:1px;background:#dadade"></div><div class="a" style="left:612px;top:0;width:7px;height:673px;background:linear-gradient(90deg,rgba(120,120,120,0.35),rgba(200,200,200,0))"></div><div class="a" style="left:612px;top:6px;width:59px;height:22px;background:#0e70c0"></div><div class="t" style="left:632px;top:12px;color:#fff;font-size:12px">File</div><div class="a" style="left:673px;top:6px;width:76px;height:23px;background:#f5f5f7;border:1px solid #dadade;border-bottom:none"></div><div class="t" style="left:696px;top:13px;color:#2f7fd5;font-size:12px">Home</div><div class="t" style="left:773px;top:13px;color:#1e1e1e;font-size:12px">View</div><div class="t" style="left:844px;top:13px;color:#1e1e1e;font-size:12px">Breakpoints</div><div class="t" style="left:952px;top:13px;color:#1e1e1e;font-size:12px">Time Travel</div><div class="t" style="left:1058px;top:13px;color:#1e1e1e;font-size:12px">Model</div><div class="t" style="left:1138px;top:13px;color:#1e1e1e;font-size:12px">Scripting</div><div class="t" style="left:1231px;top:13px;color:#1e1e1e;font-size:12px">Source</div><div class="t" style="left:1313px;top:13px;color:#1e1e1e;font-size:12px">Memory</div><div class="a" style="left:1381px;top:6px;width:81px;height:22px;background:#dde6f2"></div><div class="t" style="left:1403px;top:13px;color:#1e1e1e;font-size:12px">Command</div><div class="a" style="left:768px;top:33px;width:1px;height:85px;background:#d8d8dc"></div><div class="a" style="left:922px;top:33px;width:1px;height:85px;background:#d8d8dc"></div><div class="a" style="left:1046px;top:33px;width:1px;height:85px;background:#d8d8dc"></div><div class="a" style="left:1201px;top:33px;width:1px;height:85px;background:#d8d8dc"></div><div class="a" style="left:1307px;top:33px;width:1px;height:85px;background:#d8d8dc"></div><div class="t" style="left:655px;top:106px;color:#8a8a8a;font-size:12px">Flow Control</div><div class="t" style="left:789px;top:106px;color:#8a8a8a;font-size:12px">Reverse Flow Control</div><div class="t" style="left:974px;top:106px;color:#8a8a8a;font-size:12px">End</div><div class="t" style="left:1093px;top:106px;color:#8a8a8a;font-size:12px">Preferences</div><div class="t" style="left:1242px;top:106px;color:#8a8a8a;font-size:12px">Help</div><div class="a" style="left:624px;top:39px;width:6px;height:20px;background:#3a8ee0"></div><div class="a" style="left:634px;top:39px;width:6px;height:20px;background:#3a8ee0"></div><div class="t" style="left:618px;top:68px;font-size:12px">Break</div><svg class="a" style="left:658px;top:37px" width="18" height="22"><path d="M1 0L17 11L1 22z" fill="#2cb52c"/></svg><div class="t" style="left:658px;top:68px;font-size:12px">Go</div><svg class="a" style="left:664px;top:88px" width="6" height="4"><path d="M0 0h6L3 3.5z" fill="#222"/></svg><svg class="a" style="left:687px;top:33px" width="18" height="18"><text x="0" y="13.2" font-family="Liberation Sans" font-size="14" stroke="#111" stroke-width="0.5" fill="#111">{</text><text x="7.5" y="13.2" font-family="Liberation Sans" font-size="14" stroke="#111" stroke-width="0.5" fill="#111">}</text><path d="M6 8V1.3h6.5V6" stroke="#2ab52a" stroke-width="2" fill="none"/><path d="M9.5 5.5h6.5L12.75 9z" fill="#2ab52a"/></svg><svg class="a" style="left:687px;top:55px" width="18" height="18"><text x="0" y="13.2" font-family="Liberation Sans" font-size="14" stroke="#111" stroke-width="0.5" fill="#111">{</text><text x="10.5" y="13.2" font-family="Liberation Sans" font-size="14" stroke="#111" stroke-width="0.5" fill="#111">}</text><path d="M0 1.3h9.5V6" stroke="#2ab52a" stroke-width="2" fill="none"/><path d="M6.25 5.5h6.5L9.5 9z" fill="#2ab52a"/></svg><svg class="a" style="left:687px;top:77px" width="18" height="18"><text x="0" y="13.2" font-family="Liberation Sans" font-size="14" stroke="#111" stroke-width="0.5" fill="#111">{</text><text x="6" y="13.2" font-family="Liberation Sans" font-size="14" stroke="#111" stroke-width="0.5" fill="#111">}</text><path d="M0 1.3h13V6" stroke="#2ab52a" stroke-width="2" fill="none"/><path d="M9.75 5.5h6.5L13 9z" fill="#2ab52a"/></svg><div class="t" style="left:707px;top:36px;font-size:12px">Step Out</div><div class="t" style="left:707px;top:58px;font-size:12px">Step Into</div><div class="t" style="left:707px;top:80px;font-size:12px">Step Over</div><svg class="a" style="left:776px;top:33px" width="18" height="18"><text x="5" y="13.2" font-family="Liberation Sans" font-size="14" stroke="#8a8a8a" stroke-width="0.5" fill="#8a8a8a">{</text><text x="11.5" y="13.2" font-family="Liberation Sans" font-size="14" stroke="#8a8a8a" stroke-width="0.5" fill="#8a8a8a">}</text><path d="M11 8V1.3H4.5V6" stroke="#a8a8a8" stroke-width="2" fill="none"/><path d="M1.25 5.5h6.5L4.5 9z" fill="#a8a8a8"/></svg><svg class="a" style="left:776px;top:55px" width="18" height="18"><text x="0" y="13.2" font-family="Liberation Sans" font-size="14" stroke="#8a8a8a" stroke-width="0.5" fill="#8a8a8a">{</text><text x="11.5" y="13.2" font-family="Liberation Sans" font-size="14" stroke="#8a8a8a" stroke-width="0.5" fill="#8a8a8a">}</text><path d="M16 1.3H7.5V6" stroke="#a8a8a8" stroke-width="2" fill="none"/><path d="M4.25 5.5h6.5L7.5 9z" fill="#a8a8a8"/></svg><svg class="a" style="left:776px;top:77px" width="18" height="18"><text x="5" y="13.2" font-family="Liberation Sans" font-size="14" stroke="#8a8a8a" stroke-width="0.5" fill="#8a8a8a">{</text><text x="11" y="13.2" font-family="Liberation Sans" font-size="14" stroke="#8a8a8a" stroke-width="0.5" fill="#8a8a8a">}</text><path d="M16 1.3H3.5V6" stroke="#a8a8a8" stroke-width="2" fill="none"/><path d="M0.25 5.5h6.5L3.5 9z" fill="#a8a8a8"/></svg><div class="t" style="left:796px;top:36px;font-size:12px;color:#8a8a8a">Step Out Back</div><div class="t" style="left:796px;top:58px;font-size:12px;color:#8a8a8a">Step Into Back</div><div class="t" style="left:796px;top:80px;font-size:12px;color:#8a8a8a">Step Over Back</div><svg class="a" style="left:892px;top:37px" width="18" height="23"><path d="M17 0L1 11.5L17 23z" fill="#b8b8bc"/></svg><div class="t" style="left:891px;top:68px;font-size:12px;color:#8a8a8a">Go</div><div class="t" style="left:889px;top:84px;font-size:12px;color:#8a8a8a">Back</div><svg class="a" style="left:931px;top:35px" width="14" height="14"><path d="M3.5 4.5A5 5 0 1 0 7 2.2" stroke="#9a9a9a" stroke-width="2" fill="none"/><path d="M1 1v5h5z" fill="#9a9a9a"/></svg><div class="t" style="left:950px;top:36px;font-size:12px;color:#8a8a8a">Restart</div><div class="a" style="left:933px;top:58px;width:10px;height:10px;background:#e01b1b"></div><div class="t" style="left:950px;top:58px;font-size:12px">Stop Debugging</div><svg class="a" style="left:932px;top:78px" width="12" height="14"><path d="M6 0L11.5 7.5H0.5z" fill="#2e86de"/><rect x="0.5" y="9.5" width="11" height="3.5" fill="#2e86de"/></svg><div class="t" style="left:950px;top:80px;font-size:12px">Detach</div><svg class="a" style="left:1065px;top:35px" width="22" height="29"><path d="M0.5 0.5h15.5l5 5v22.5h-20.5z" fill="#f9f9f9" stroke="#8e8e8e"/><path d="M15.5 0.5v5.5h5.5" fill="#fff" stroke="#8e8e8e"/><path d="M4 4.5h8" stroke="#aaa"/><circle cx="5" cy="11" r="1.7" fill="#666"/><circle cx="5" cy="17" r="1.6" fill="none" stroke="#888"/><circle cx="5" cy="23" r="1.6" fill="none" stroke="#888"/><path d="M8.5 11h9M8.5 17h9M8.5 23h9" stroke="#999" stroke-width="1.1"/></svg><div class="t" style="left:1054px;top:68px;font-size:12px">Settings</div><svg class="a" style="left:1110px;top:35px" width="22" height="29"><path d="M0.5 0.5h15.5l5 5v22.5h-20.5z" fill="#f9f9f9" stroke="#8e8e8e"/><path d="M15.5 0.5v5.5h5.5" fill="#fff" stroke="#8e8e8e"/><path d="M6.5 12l-3.5 3 3.5 3M15 12l3.5 3-3.5 3M12.5 10.5l-3 9" stroke="#333" stroke-width="1.1" fill="none"/></svg><div class="t" style="left:1103px;top:68px;font-size:12px">Source</div><div class="a" style="left:1142px;top:30px;width:56px;height:68px;background:#c7dbef;border:1px solid #7fb0e4"></div><svg class="a" style="left:1159px;top:35px" width="22" height="29"><path d="M0.5 0.5h15.5l5 5v22.5h-20.5z" fill="#f9f9f9" stroke="#8e8e8e"/><path d="M15.5 0.5v5.5h5.5" fill="#fff" stroke="#8e8e8e"/><text x="10.5" y="15" text-anchor="middle" font-family="Liberation Sans" font-size="8.5" fill="#222" letter-spacing="-0.3">0II0I</text><text x="10.5" y="22.5" text-anchor="middle" font-family="Liberation Sans" font-size="8.5" fill="#222" letter-spacing="-0.3">I0I0I</text></svg><div class="t" style="left:1145px;top:68px;font-size:12px">Assembly</div><svg class="a" style="left:1212px;top:33px" width="30" height="30"><circle cx="15" cy="15" r="15" fill="#0f5fb8"/><text x="15" y="24" text-anchor="middle" font-family="Liberation Sans" font-size="24" fill="#fff">?</text></svg><div class="t" style="left:1213px;top:68px;font-size:12px">Local</div><div class="t" style="left:1212px;top:84px;font-size:12px">Help</div><svg class="a" style="left:1240px;top:88px" width="6" height="4"><path d="M0 0h6L3 3.5z" fill="#222"/></svg><svg class="a" style="left:1260px;top:33px" width="32" height="32"><rect width="32" height="32" fill="#0a6fd6"/><path d="M17 2h14v13h-9l-5 4v-4z" fill="#fff"/><circle cx="12" cy="16" r="5.5" fill="#0a6fd6"/><circle cx="12" cy="16" r="4.5" fill="#fff"/><path d="M1.5 32c0-7 4.5-10.5 10.5-10.5s10.5 3.5 10.5 10.5z" fill="#fff"/></svg><div class="t" style="left:1251px;top:68px;font-size:12px">Feedback</div><div class="a" style="left:612px;top:124px;width:850px;height:21px;background:#eeeef2"></div><div class="a" style="left:613px;top:124px;width:129px;height:22px;background:#cccedb"></div><div class="a" style="left:612px;top:145px;width:850px;height:2px;background:#cccedb"></div><div class="t" style="left:615px;top:129px;font-size:12px;color:#1e1e1e">Disassembly</div><svg class="a" style="left:721px;top:129px" width="12" height="12"><path d="M1 1l10 10M11 1L1 11" stroke="#1e1e1e" stroke-width="1.2"/></svg><div class="t" style="left:617px;top:160px;font-size:12px;color:#1e1e1e">Address:</div><div class="a" style="left:667px;top:155px;width:300px;height:20px;background:#fff;border:1px solid #a8a8a8"></div><div class="t mono" style="left:672px;top:160px;font-size:11px;color:#1e1e1e">@$scopeip</div><svg class="a" style="left:977px;top:158px" width="14" height="14"><rect x="0.5" y="0.5" width="13" height="13" fill="#fff" stroke="#222"/><path d="M2.8 6.8l3 3.2 5.4-7" stroke="#111" stroke-width="2.1" fill="none"/></svg><div class="t" style="left:997px;top:160px;font-size:12px;color:#1e1e1e">Follow current instruction</div><div class="a" style="left:612px;top:182px;width:850px;height:229px;overflow:hidden"><div class="t mono" style="left:7.9px;top:-1.8px;font-size:12.33px;line-height:13px"><span style="color:#1e1e1e">fffff800`4c658f2e 48895c2420     </span><span style="color:#2d2dc0">mov     </span><span style="color:#1e1e1e">qword ptr [rsp+</span><span style="color:#157040">20h</span><span style="color:#1e1e1e">], rbx</span></div><div class="t mono" style="left:7.9px;top:12.48px;font-size:12.33px;line-height:13px"><span style="color:#1e1e1e">fffff800`4c658f33 4533c9         </span><span style="color:#1a1ad8">xor     </span><span style="color:#1e1e1e">r9d, r9d</span></div><div class="t mono" style="left:7.9px;top:26.76px;font-size:12.33px;line-height:13px"><span style="color:#1e1e1e">fffff800`4c658f36 4533c0         </span><span style="color:#1a1ad8">xor     </span><span style="color:#1e1e1e">r8d, r8d</span></div><div class="t mono" style="left:7.9px;top:41.04px;font-size:12.33px;line-height:13px"><span style="color:#1e1e1e">fffff800`4c658f39 33d2           </span><span style="color:#1a1ad8">xor     </span><span style="color:#1e1e1e">edx, edx</span></div><div class="t mono" style="left:7.9px;top:55.32px;font-size:12.33px;line-height:13px"><span style="color:#1e1e1e">fffff800`4c658f3b 4c8b157ed1ffff </span><span style="color:#2d2dc0">mov     </span><span style="color:#1e1e1e">r10, qword ptr [MSKSSRV!__imp_KeWaitForSingleObject (fffff8004c6560c0)]</span></div><div class="t mono" style="left:7.9px;top:69.6px;font-size:12.33px;line-height:13px"><span style="color:#1e1e1e">fffff800`4c658f42 e83917e7fb     </span><span style="color:#9a7a3a">call    </span><span style="color:#ff00ff">ntkrnlmp!KeWaitForSingleObject (fffff800484ca680)</span></div><div class="t mono" style="left:7.9px;top:83.88px;font-size:12.33px;line-height:13px"><span style="color:#1e1e1e">fffff800`4c658f47 4885ff         </span><span style="color:#1a1ad8">test    </span><span style="color:#1e1e1e">rdi, rdi</span></div><div class="t mono" style="left:7.9px;top:98.16px;font-size:12.33px;line-height:13px"><span style="color:#1e1e1e">fffff800`4c658f4a 7507           </span><span style="color:#e8803a">jne     </span><span style="color:#ff00ff">MSKSSRV!FSGetRendezvousServer+0x3b (fffff8004c658f53)</span></div><div class="t mono" style="left:7.9px;top:112.44px;font-size:12.33px;line-height:13px"><span style="color:#1e1e1e">fffff800`4c658f4c bb0d0000c0     </span><span style="color:#2d2dc0">mov     </span><span style="color:#1e1e1e">ebx, </span><span style="color:#157040">0C000000Dh</span></div><div class="t mono" style="left:7.9px;top:126.72px;font-size:12.33px;line-height:13px"><span style="color:#1e1e1e">fffff800`4c658f51 eb19           </span><span style="color:#3a2a2a">jmp     </span><span style="color:#ff00ff">MSKSSRV!FSGetRendezvousServer+0x54 (fffff8004c658f6c)</span></div><div class="t mono" style="left:7.9px;top:141.0px;font-size:12.33px;line-height:13px"><span style="color:#1e1e1e">fffff800`4c658f53 488b0506b1ffff </span><span style="color:#2d2dc0">mov     </span><span style="color:#1e1e1e">rax, qword ptr [MSKSSRV!__isa_info+0x20 (fffff8004c654060)]</span></div><div class="t mono" style="left:7.9px;top:155.28px;font-size:12.33px;line-height:13px"><span style="color:#1e1e1e">fffff800`4c658f5a 4885c0         </span><span style="color:#1a1ad8">test    </span><span style="color:#1e1e1e">rax, rax</span></div><div class="t mono" style="left:7.9px;top:169.56px;font-size:12.33px;line-height:13px"><span style="color:#1e1e1e">fffff800`4c658f5d 7507           </span><span style="color:#e8803a">jne     </span><span style="color:#ff00ff">MSKSSRV!FSGetRendezvousServer+0x4e (fffff8004c658f66)</span></div><div class="a" style="left:7px;top:181.84px;width:843px;height:14px;background:#fce98a"></div><div class="t mono" style="left:7.9px;top:183.84px;font-size:12.33px;line-height:13px"><span style="color:#1e1e1e">fffff800`4c658f5f bb100000c0     </span><span style="color:#1e1e1e">mov     </span><span style="color:#1e1e1e">ebx, 0C0000010h</span></div><div class="t mono" style="left:7.9px;top:198.12px;font-size:12.33px;line-height:13px"><span style="color:#1e1e1e">fffff800`4c658f64 eb06           </span><span style="color:#3a2a2a">jmp     </span><span style="color:#ff00ff">MSKSSRV!FSGetRendezvousServer+0x54 (fffff8004c658f6c)</span></div><div class="t mono" style="left:7.9px;top:212.4px;font-size:12.33px;line-height:13px"><span style="color:#1e1e1e">fffff800`4c658f66 488907         </span><span style="color:#2d2dc0">mov     </span><span style="color:#1e1e1e">qword ptr [rdi], rax</span></div><div class="t mono" style="left:7.9px;top:226.68px;font-size:12.33px;line-height:13px"><span style="color:#1e1e1e">fffff800`4c658f69 f0ff00         </span><span style="color:#2d2dc0">lock inc </span><span style="color:#1e1e1e">dword ptr [rax]</span></div></div><div class="a" style="left:612px;top:411px;width:850px;height:5px;background:#e6e6ea"></div><div class="a" style="left:612px;top:416px;width:850px;height:24px;background:#0276c9"></div><div class="t" style="left:614px;top:422px;font-size:12px;color:#fff">Command</div><div class="t mono" style="left:620px;top:442.8px;font-size:12.33px;line-height:13px;color:#1e1e1e">2: kd&gt; k</div><div class="t mono" style="left:620px;top:457.08px;font-size:12.33px;line-height:13px;color:#1e1e1e"> # Child-SP          RetAddr               Call Site</div><div class="t mono" style="left:620px;top:471.36px;font-size:12.33px;line-height:13px;color:#1e1e1e"><span style="color:#0000e0;text-decoration:underline">00</span> ffff9703`9de30570 fffff800`4c658618     MSKSSRV!FSGetRendezvousServer+0x47</div><div class="t mono" style="left:620px;top:485.64px;font-size:12.33px;line-height:13px;color:#1e1e1e"><span style="color:#0000e0;text-decoration:underline">01</span> ffff9703`9de305b0 fffff800`4e9b782c     MSKSSRV!SrvDispatchIoControl+0xf8</div><div class="t mono" style="left:620px;top:499.92px;font-size:12.33px;line-height:13px;color:#1e1e1e"><span style="color:#0000e0;text-decoration:underline">02</span> ffff9703`9de30600 fffff800`484cb875     ks!DispatchDeviceIoControl+0x3c</div><div class="t mono" style="left:620px;top:514.2px;font-size:12.33px;line-height:13px;color:#1e1e1e"><span style="color:#0000e0;text-decoration:underline">03</span> ffff9703`9de30630 fffff800`4ed21415     nt!IofCallDriver+0x55</div><div class="t mono" style="left:620px;top:528.48px;font-size:12.33px;line-height:13px;color:#1e1e1e"><span style="color:#0000e0;text-decoration:underline">04</span> ffff9703`9de30670 fffff800`4ed21133     ksthunk!CKernelFilterDevice::DispatchIrp+0xf5</div><div class="t mono" style="left:620px;top:542.76px;font-size:12.33px;line-height:13px;color:#1e1e1e"><span style="color:#0000e0;text-decoration:underline">05</span> ffff9703`9de306d0 fffff800`484cb875     ksthunk!CKernelFilterDevice::DispatchIrpBridge+0x13</div><div class="t mono" style="left:620px;top:557.04px;font-size:12.33px;line-height:13px;color:#1e1e1e"><span style="color:#0000e0;text-decoration:underline">06</span> ffff9703`9de30700 fffff800`488c2c70     nt!IofCallDriver+0x55</div><div class="t mono" style="left:620px;top:571.32px;font-size:12.33px;line-height:13px;color:#1e1e1e"><span style="color:#0000e0;text-decoration:underline">07</span> ffff9703`9de30740 fffff800`488c123c     nt!IopSynchronousServiceTail+0x1d0</div><div class="t mono" style="left:620px;top:585.6px;font-size:12.33px;line-height:13px;color:#1e1e1e"><span style="color:#0000e0;text-decoration:underline">08</span> ffff9703`9de307f0 fffff800`488bf516     nt!IopXxxControlFile+0x72c</div><div class="t mono" style="left:620px;top:599.88px;font-size:12.33px;line-height:13px;color:#1e1e1e"><span style="color:#0000e0;text-decoration:underline">09</span> ffff9703`9de30a00 fffff800`4863d1e5     nt!NtDeviceIoControlFile+0x56</div><div class="t mono" style="left:620px;top:614.16px;font-size:12.33px;line-height:13px;color:#1e1e1e"><span style="color:#0000e0;text-decoration:underline">0a</span> ffff9703`9de30a70 00007ffd`f6bceee4     nt!KiSystemServiceCopyEnd+0x25</div><div class="t mono" style="left:620px;top:628.44px;font-size:12.33px;line-height:13px;color:#1e1e1e"><span style="color:#0000e0;text-decoration:underline">0b</span> 000000b2`a1cff288 00007ff7`1aa2e1bb     ntdll!NtDeviceIoControlFile+0x14</div><div class="t mono" style="left:620px;top:642.72px;font-size:12.33px;line-height:13px;color:#1e1e1e"><span style="color:#0000e0;text-decoration:underline">0c</span> 000000b2`a1cff290 00000000`00000000     FileTest+0x1e1bb</div><svg class="a" style="left:0;top:0;pointer-events:none;opacity:0.64" width="1462" height="673"><g fill="rgb(183,220,183)"><text transform="translate(512.2 330.8) scale(1.012 1.031)" font-family="Liberation Sans" font-weight="bold" font-size="142" stroke="rgb(183,220,183)" stroke-width="2.4" stroke-linejoin="miter">X</text><text transform="translate(612.3 332.8) scale(1.01 1.05)" font-family="Liberation Sans" font-weight="bold" font-size="142">S</text><text transform="translate(706.1 332.8) scale(0.98 1.05)" font-family="Liberation Sans" font-weight="bold" font-size="142">S</text><text transform="translate(798 332) scale(1.0 0.786)" font-family="Liberation Sans" font-weight="bold" font-size="142">.</text><text transform="translate(838.5 333) scale(0.947 0.995)" font-family="Liberation Sans" font-weight="bold" font-size="142">i</text><text transform="translate(878.2 333) scale(0.956 1.013)" font-family="Liberation Sans" font-weight="bold" font-size="142">s</text></g></svg>
</body></html>
